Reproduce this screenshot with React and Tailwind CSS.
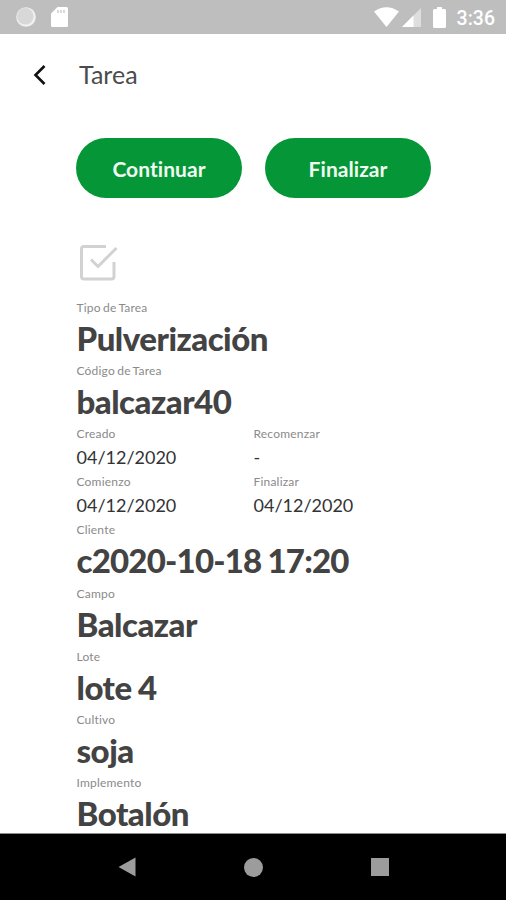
import React from 'react';

const StatusBar = () => (
  <div className="flex h-[34px] shrink-0 items-center justify-between bg-[#bebebe] pl-4 pr-[11px]">
    <div className="flex items-center">
      <svg className="h-5 w-5" viewBox="0 0 20 20">
        <circle cx="10" cy="10" r="9.8" fill="#f0f0f0" />
        <circle cx="9.3" cy="9.3" r="8.3" fill="#d8d8d8" />
      </svg>
      <svg className="ml-[15px] h-5 w-[17px]" viewBox="0 0 17 20">
        <path d="M6.5 0H15.5Q17 0 17 1.5V18.5Q17 20 15.5 20H1.5Q0 20 0 18.5V6.5Z" fill="#fff" />
        <path d="M7 3v3M10 3v3M13 3v3" stroke="#d2d2d2" strokeWidth="1.6" />
      </svg>
    </div>
    <div className="flex items-center">
      <svg className="h-5 w-[25px]" viewBox="0 0 25 20">
        <path d="M0 4.5Q12.5-4 25 4.5L12.5 20Z" fill="#fff" />
      </svg>
      <svg className="ml-[3px] h-5 w-[19px]" viewBox="0 0 19 20">
        <path d="M19 1V20H0Z" fill="#dedede" />
        <path d="M11.5 8.5V20H0Z" fill="#fff" />
      </svg>
      <svg className="ml-[12px] h-[21px] w-[13px]" viewBox="0 0 13 21">
        <path d="M4 0H9V2H11.5Q13 2 13 3.5V19.5Q13 21 11.5 21H1.5Q0 21 0 19.5V3.5Q0 2 1.5 2H4Z" fill="#fff" />
      </svg>
      <span className="ml-[11px] mt-[3px] font-[Roboto,sans-serif] text-[19.5px] font-medium leading-none text-white">
        3:36
      </span>
    </div>
  </div>
);

const Header = () => (
  <header className="flex h-[82px] shrink-0 items-center pl-[33px]">
    <svg className="h-5 w-[13px]" viewBox="0 0 13 20" fill="none">
      <path d="M11.5 1L2.5 10L11.5 19" stroke="#111" strokeWidth="2.6" />
    </svg>
    <h1 className="-mt-[2px] ml-[33px] text-[25px] leading-none text-[#4c4c4c]">Tarea</h1>
  </header>
);

const ActionButton = ({ children }) => (
  <button className="h-[60px] w-[166px] rounded-full bg-[#059637] pt-px text-[21px] font-bold tracking-[0.05px] text-[#f0faf0]">
    {children}
  </button>
);

const Label = ({ children }) => (
  <dt className="pt-px text-[12px] leading-[15px] tracking-[0.2px] text-[#8a8a8a] [word-spacing:-1px]">
    {children}
  </dt>
);

const Field = ({ label, value, spacing = 'tracking-[-0.5px]' }) => (
  <div>
    <Label>{label}</Label>
    <dd className={`pb-[7.3px] pt-[6px] text-[33px] font-black leading-[34px] text-[#434343] ${spacing}`}>
      {value}
    </dd>
  </div>
);

const DateField = ({ label, value }) => (
  <div className="w-[177px]">
    <Label>{label}</Label>
    <dd className="text-[18px] leading-[32px] text-[#333]">{value}</dd>
  </div>
);

const NavigationBar = () => (
  <nav className="flex h-[67px] shrink-0 items-center border-t border-[#8a8a8a] bg-black pl-[118px]">
    <svg className="h-5 w-[18px]" viewBox="0 0 18 20">
      <path d="M17.5 0.5V19.5L0.5 10Z" fill="#9c9c9c" />
    </svg>
    <div className="ml-[108px] h-[19px] w-[19px] rounded-full bg-[#9c9c9c]" />
    <div className="ml-[108px] h-[18px] w-[18px] bg-[#9c9c9c]" />
  </nav>
);

const App = () => {
  return (
    <div className="flex h-[900px] w-[506px] flex-col overflow-hidden bg-white font-[Lato,sans-serif]">
      <StatusBar />
      <Header />
      <main className="min-h-0 flex-1 overflow-hidden pl-[76px] pt-[22px]">
        <div className="flex gap-[23px]">
          <ActionButton>Continuar</ActionButton>
          <ActionButton>Finalizar</ActionButton>
        </div>

        <svg className="ml-[3px] mt-[46px] h-[38px] w-[40px]" viewBox="0 0 40 38" fill="none" stroke="#d2d2d2" strokeWidth="3" strokeLinejoin="round">
          <path d="M27 2.5H5Q2.5 2.5 2.5 5V32.5Q2.5 35 5 35H32.5Q35 35 35 32.5V18" />
          <path d="M12 15.5L19 22.5L37.5 4" />
        </svg>

        <dl className="mt-[16.7px] pl-[0.5px]">
          <Field label="Tipo de Tarea" value="Pulverización" />
          <Field label="Código de Tarea" value="balcazar40" />
          <div className="flex">
            <DateField label="Creado" value="04/12/2020" />
            <DateField label="Recomenzar" value="-" />
          </div>
          <div className="flex">
            <DateField label="Comienzo" value="04/12/2020" />
            <DateField label="Finalizar" value="04/12/2020" />
          </div>
          <Field label="Cliente" value="c2020-10-18 17:20" spacing="tracking-[-0.8px] [word-spacing:-1px]" />
          <Field label="Campo" value="Balcazar" />
          <Field label="Lote" value="lote 4" spacing="tracking-[-0.5px] [word-spacing:-1px]" />
          <Field label="Cultivo" value="soja" />
          <Field label="Implemento" value="Botalón" />
        </dl>
      </main>
      <NavigationBar />
    </div>
  );
};

export default App;
